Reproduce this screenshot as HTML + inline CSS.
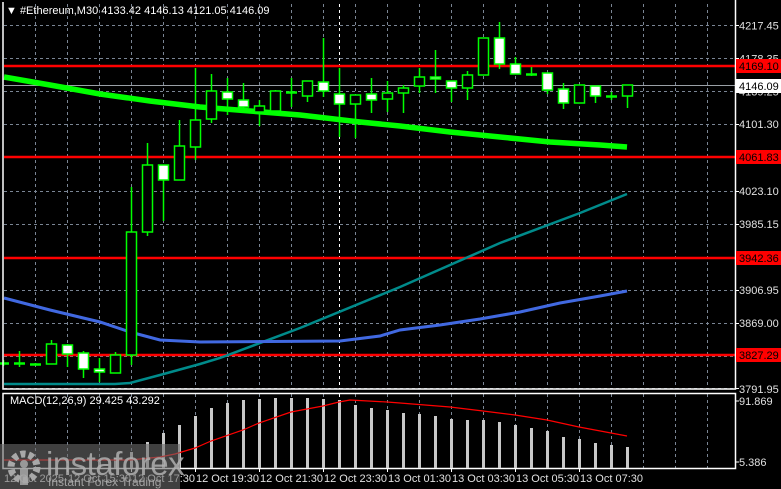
<!DOCTYPE html>
<html><head><meta charset="utf-8"><style>
html,body{margin:0;padding:0;background:#000;}
body{width:781px;height:489px;overflow:hidden;position:relative;font-family:"Liberation Sans",sans-serif;}
svg{position:absolute;left:0;top:0;}
</style></head><body>
<svg width="781" height="489" viewBox="0 0 781 489" xmlns="http://www.w3.org/2000/svg" font-family="Liberation Sans, sans-serif">
<rect width="781" height="489" fill="#000"/>
<g stroke="#7a8594" stroke-width="1" stroke-dasharray="3,3" fill="none">
<path d="M4 25.5H735M4 58.5H735M4 91.5H735M4 124.5H735M4 157.5H735M4 191.5H735M4 224.5H735M4 257.5H735M4 290.5H735M4 323.5H735M4 356.5H735M4 388.5H735"/>
<path d="M35.5 4V389M67.5 4V389M99.5 4V389M131.5 4V389M163.5 4V389M195.5 4V389M227.5 4V389M259.5 4V389M291.5 4V389M323.5 4V389M355.5 4V389M387.5 4V389M419.5 4V389M451.5 4V389M483.5 4V389M515.5 4V389M547.5 4V389M579.5 4V389M611.5 4V389M643.5 4V389M675.5 4V389M707.5 4V389"/>
<path d="M35.5 394V468M67.5 394V468M99.5 394V468M131.5 394V468M163.5 394V468M195.5 394V468M227.5 394V468M259.5 394V468M291.5 394V468M323.5 394V468M355.5 394V468M387.5 394V468M419.5 394V468M451.5 394V468M483.5 394V468M515.5 394V468M547.5 394V468M579.5 394V468M611.5 394V468M643.5 394V468M675.5 394V468M707.5 394V468"/>
</g>
<path d="M339.5 4V389M339.5 394V468" stroke="#fff" stroke-dasharray="3,3"/>
<!-- red levels -->
<g stroke="#ff0000" stroke-width="2.5">
<path d="M4 66H735M4 157H735M4 258H735M4 355H735"/>
</g>
<path d="M4 85.5H735" stroke="#9aa0a6" stroke-width="1"/>
<!-- MAs -->
<polyline fill="none" stroke="#008b8b" stroke-width="2.5" points="4,384 115,384 130,383 160,375 200,364 220,358 300,328 400,287 500,243 580,213 627,194"/>
<polyline fill="none" stroke="#4169e1" stroke-width="3" points="4,298 50,310 100,322 130,332 160,340 200,342 340,341 380,336 400,330 440,325 480,319 520,312 560,303 600,296 627,291"/>
<polyline fill="none" stroke="#00ff00" stroke-width="5.5" points="4,77 50,85 100,94 150,101 200,107 250,111 300,115 360,122 400,126 450,132 500,137 550,142 600,145 627,147"/>
<!-- candles -->
<g stroke="#00ff00" stroke-width="1.5" id="c"></g>
<!-- borders -->
<path d="M3 2V389H735.5V0M3 393.5H735.5V468.5H3Z" stroke="#fff" fill="none" stroke-width="1.5"/>
<g stroke="#fff"><path d="M735 25.5h4M735 58.5h4M735 91.5h4M735 124.5h4M735 191.5h4M735 224.5h4M735 290.5h4M735 323.5h4M735 388.5h4M735 401h4M735 462h4"/>
<path d="M195.5 468v4M259.5 468v4M323.5 468v4M387.5 468v4M451.5 468v4M515.5 468v4M579.5 468v4M131.5 468v4M67.5 468v4"/></g>
<!-- MACD histogram -->
<g stroke="#c8c8c8" stroke-width="3" id="h"></g>
<polyline fill="none" stroke="#ff0000" stroke-width="1.2" points="4,460 130,460 160,457 175,454 195,448 211,441 243,430 259,423 291,412 323,406 339,402 350,400 387,402 400,403 450,407 483,411 515,415 547,420 579,427 611,433 627,436"/>
<!-- title -->
<text x="6" y="14" font-size="11" fill="#fff">▼ #Ethereum,M30  4133.42 4146.13 4121.05 4146.09</text>
<text x="10" y="404" font-size="11" fill="#fff">MACD(12,26,9) 29.425 43.292</text>
<!-- price labels -->
<g font-size="11" fill="#e0e0e0">
<text x="739" y="29.5">4217.45</text>
<text x="739" y="62.5">4178.35</text>
<text x="739" y="95.5">4139.25</text>
<text x="739" y="128">4101.30</text>
<text x="739" y="195">4023.10</text>
<text x="739" y="228">3985.15</text>
<text x="739" y="294">3906.95</text>
<text x="739" y="327">3869.00</text>
<text x="739" y="393">3791.95</text>
<text x="739" y="405">91.869</text>
<text x="739" y="466">5.386</text>
</g>
<rect x="736" y="59" width="45" height="14" fill="#ff0000"/><text x="739" y="70" font-size="11" fill="#000">4169.10</text>
<rect x="736" y="79" width="45" height="14" fill="#fff"/><text x="739" y="90" font-size="11" fill="#000">4146.09</text>
<rect x="736" y="150" width="45" height="14" fill="#ff0000"/><text x="739" y="161" font-size="11" fill="#000">4061.83</text>
<rect x="736" y="251" width="45" height="14" fill="#ff0000"/><text x="739" y="262" font-size="11" fill="#000">3942.36</text>
<rect x="736" y="348" width="45" height="14" fill="#ff0000"/><text x="739" y="359" font-size="11" fill="#000">3827.29</text>
<!-- time labels -->
<g font-size="11" fill="#e0e0e0">
<text x="4" y="482">12 Oct 2025</text>
<text x="68" y="482">12 Oct 15:30</text>
<text x="132" y="482">12 Oct 17:30</text>
<text x="196" y="482">12 Oct 19:30</text>
<text x="260" y="482">12 Oct 21:30</text>
<text x="324" y="482">12 Oct 23:30</text>
<text x="388" y="482">13 Oct 01:30</text>
<text x="452" y="482">13 Oct 03:30</text>
<text x="516" y="482">13 Oct 05:30</text>
<text x="580" y="482">13 Oct 07:30</text>
</g>
<!-- watermark -->
<rect x="0" y="444" width="180" height="45" fill="#6a6a6a" fill-opacity="0.6"/>
<g fill="#a8a8a8" fill-opacity="0.85">
<circle cx="24" cy="467" r="13" fill="none" stroke="#a8a8a8" stroke-width="7" stroke-dasharray="5,3.2"/>
<circle cx="24" cy="464" r="4"/>
<rect x="20" y="469" width="8" height="16"/>
</g>
<text x="46" y="475" font-size="33" fill="#b0b0b0" fill-opacity="0.85" letter-spacing="-0.5">instaforex</text>
<text x="48" y="486" font-size="12" fill="#b0b0b0" fill-opacity="0.85">Instant Forex Trading</text>
</svg>
<script>
var C=[[3,360,366,363,363,'d'],[19,351,367,363,363,'d'],[35,363,365,364,364,'d'],[51,340,364,344,364,'b'],[67,344,367,345,354,'w'],[83,351,378,353,369,'w'],[99,358,382,369,372,'w'],[115,352,373,355,373,'b'],[131,187,365,232,355,'b'],[147,143,236,165,232,'b'],[163,165,221,165,180,'w'],[179,120,180,146,180,'b'],[195,68,160,120,147,'b'],[211,74,123,91,119,'b'],[227,78,115,92,99,'w'],[243,83,113,100,107,'w'],[259,100,126,106,112,'b'],[275,90,111,91,111,'b'],[291,78,107,92,92,'d'],[307,81,102,81,96,'b'],[323,38,97,82,91,'w'],[339,68,137,94,104,'w'],[355,95,138,95,104,'b'],[371,78,113,94,100,'w'],[387,81,112,93,99,'b'],[403,85,113,88,93,'b'],[419,68,93,77,86,'b'],[435,50,93,77,79,'w'],[451,81,102,81,88,'w'],[467,71,100,75,88,'b'],[483,38,75,38,75,'b'],[499,22,69,38,64,'w'],[515,57,74,64,74,'w'],[531,67,76,74,74,'d'],[547,73,94,73,90,'w'],[563,83,109,89,103,'w'],[579,85,103,85,103,'b'],[595,86,103,86,96,'w'],[611,92,100,96,96,'d'],[627,85,108,85,96,'b']];
var ns="http://www.w3.org/2000/svg",g=document.getElementById('c'),s='';
C.forEach(function(c){var x=c[0];s+='<path d="M'+(x+.5)+' '+c[1]+'V'+c[2]+'"/>';
if(c[5]=='d'){s+='<path d="M'+(x-5)+' '+(c[3]+.5)+'H'+(x+6)+'" stroke-width="2.5"/>';}
else{var h=Math.max(c[4]-c[3],2);s+='<rect x="'+(x-4.5)+'" y="'+c[3]+'" width="10" height="'+h+'" fill="'+(c[5]=='w'?'#fff':'#000')+'"/>';}});
g.innerHTML=s;
var H=[[99,462],[115,458],[131,452],[147,442],[163,433],[179,425],[195,416],[211,408],[227,403],[243,400],[259,399],[275,398],[291,398],[307,398],[323,399],[339,400],[355,405],[371,408],[387,410],[403,413],[419,414],[435,416],[451,419],[467,420],[483,420],[499,422],[515,425],[531,428],[547,431],[563,437],[579,439],[595,443],[611,445],[627,447]];
var t='';H.forEach(function(b){t+='<path d="M'+(b[0]+.5)+' '+b[1]+'V468"/>';});
document.getElementById('h').innerHTML=t;
</script>
</body></html>
